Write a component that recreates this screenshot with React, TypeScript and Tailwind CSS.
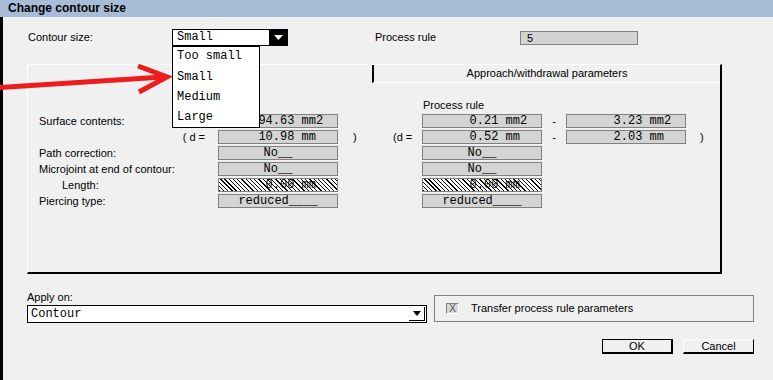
import React from "react";

const SANS = "font-['Liberation_Sans',Arial,sans-serif]";

function Field({
  children,
  kind = "num",
}: {
  children?: React.ReactNode;
  kind?: "num" | "center" | "hatch";
}) {
  if (kind === "hatch") {
    return (
      <div className="h-[14px] w-[120px] border border-[#808080] bg-[repeating-linear-gradient(45deg,#000_0px,#000_0.9px,#fff_0.9px,#fff_3px)] font-['Liberation_Mono','Courier_New',monospace] text-[12px] leading-[12px] whitespace-pre flex items-center pl-[25px] text-black">
        {children}
      </div>
    );
  }
  if (kind === "center") {
    return (
      <div className="h-[14px] w-[120px] border border-[#808080] bg-[#d4d4d4] font-['Liberation_Mono','Courier_New',monospace] text-[12px] leading-[12px] whitespace-pre flex items-center justify-center text-black">
        {children}
      </div>
    );
  }
  return (
    <div className="h-[14px] w-[120px] border border-[#808080] bg-[#d4d4d4] font-['Liberation_Mono','Courier_New',monospace] text-[12px] leading-[12px] whitespace-pre flex items-center pl-[25px] text-black">
      {children}
    </div>
  );
}

function Row({
  label,
  labelIndent = false,
  dLeft = false,
  left,
  mid,
  right,
  right2,
  close = false,
}: {
  label?: string;
  labelIndent?: boolean;
  dLeft?: boolean;
  left?: React.ReactNode;
  mid?: React.ReactNode;
  right?: React.ReactNode;
  right2?: React.ReactNode;
  close?: boolean;
}) {
  return (
    <div className="flex h-[14px] mt-[2px] items-center">
      <div
        className={
          dLeft
            ? "w-[179px] flex justify-end pr-[13px] text-[11px]"
            : labelIndent
            ? "w-[179px] pl-[23px] text-[11px]"
            : "w-[179px] text-[11px]"
        }
      >
        {dLeft ? "( d =" : label}
      </div>
      {left}
      <div className="w-[84px] flex text-[11px]">{mid}</div>
      {right}
      {right2 ? (
        <>
          <div className="w-[24px] text-center text-[11px]">-</div>
          {right2}
        </>
      ) : null}
      {close ? <div className="pl-[14px] text-[11px]">)</div> : null}
    </div>
  );
}

export default function App() {
  return (
    <div
      className={`relative w-[773px] h-[380px] overflow-hidden bg-[#f0f0f0] text-black ${SANS}`}
    >
      {/* title bar */}
      <div className="h-[17px] bg-[#a7bcd6] pl-[8px] text-[12px] font-bold leading-[17px]">
        Change contour size
      </div>

      <div className="flex h-[363px]">
        <div className="w-[3px] bg-black" />
        <div className="flex-1 flex flex-col">
          {/* top row */}
          <div className="flex items-center h-[17px] mt-[12px] pl-[25px]">
            <div className="w-[144px] text-[11px]">Contour size:</div>
            <div className="relative w-[116px] h-[17px] border border-black bg-white flex">
              <span className="flex-1 pl-[4px] font-['Liberation_Mono','Courier_New',monospace] text-[12px] leading-[15px]">
                Small
              </span>
              <span className="w-[18px] bg-black flex items-center justify-center">
                <svg width="9" height="5" viewBox="0 0 9 5">
                  <path d="M0 0 L9 0 L4.5 5 Z" fill="#fff" />
                </svg>
              </span>
              {/* open dropdown list */}
              <div className="absolute left-[-1px] top-[16px] w-[88px] border border-black bg-white z-10 font-['Liberation_Mono','Courier_New',monospace] text-[12px]">
                <div className="h-[20px] leading-[18px] pl-[4px]">Too small</div>
                <div className="h-[20px] leading-[20px] pl-[4px]">Small</div>
                <div className="h-[20px] leading-[20px] pl-[4px]">Medium</div>
                <div className="h-[20px] leading-[20px] pl-[4px]">Large</div>
              </div>
            </div>
            <div className="ml-[87px] w-[145px] text-[11px]">Process rule</div>
            <div className="w-[118px] h-[14px] border border-[#808080] bg-[#d4d4d4] pl-[6px] text-[11px] leading-[12px]">
              5
            </div>
          </div>

          {/* tab panel */}
          <div className="ml-[24px] mt-[18px] w-[695px] h-[210px] border-t border-l border-t-white border-l-white border-r-2 border-b-2 border-r-black border-b-black flex flex-col">
            <div className="flex h-[18px]">
              <div className="w-[344px]" />
              <div className="flex-1 border-l-2 border-l-black border-b border-b-white flex items-center justify-center text-[11px]">
                Approach/withdrawal parameters
              </div>
            </div>
            <div className="pl-[11px] flex flex-col">
              <div className="flex h-[14px] mt-[15px] items-center">
                <div className="ml-[384px] text-[11px]">Process rule</div>
              </div>
              <Row
                label="Surface contents:"
                left={<Field>{"1094.63 mm2"}</Field>}
                right={<Field>{"   0.21 mm2"}</Field>}
                right2={<Field>{"   3.23 mm2"}</Field>}
              />
              <Row
                dLeft
                left={<Field>{"  10.98 mm"}</Field>}
                mid={
                  <>
                    <span className="w-[55px] pl-[15px]">)</span>
                    <span>(d =</span>
                  </>
                }
                right={<Field>{"   0.52 mm"}</Field>}
                right2={<Field>{"   2.03 mm"}</Field>}
                close
              />
              <Row
                label="Path correction:"
                left={<Field kind="center">{"No__"}</Field>}
                right={<Field kind="center">{"No__"}</Field>}
              />
              <Row
                label="Microjoint at end of contour:"
                left={<Field kind="center">{"No__"}</Field>}
                right={<Field kind="center">{"No__"}</Field>}
              />
              <Row
                label="Length:"
                labelIndent
                left={<Field kind="hatch">{"   0.00 mm"}</Field>}
                right={<Field kind="hatch">{"   0.00 mm"}</Field>}
              />
              <Row
                label="Piercing type:"
                left={<Field kind="center">{"reduced____"}</Field>}
                right={<Field kind="center">{"reduced____"}</Field>}
              />
            </div>
          </div>

          {/* bottom row */}
          <div className="flex items-start ml-[24px] mt-[16px]">
            <div className="w-[400px] flex flex-col">
              <div className="h-[14px] leading-[14px] text-[11px]">Apply on:</div>
              <div className="mt-[1px] h-[18px] border border-black bg-white flex items-center">
                <span className="flex-1 pl-[3px] font-['Liberation_Mono','Courier_New',monospace] text-[12px] leading-[14px]">
                  Contour
                </span>
                <span className="w-[16px] h-[14px] mr-[1px] border-r border-b border-black bg-white flex items-center justify-center">
                  <svg width="8" height="5" viewBox="0 0 8 5">
                    <path d="M0 0 L8 0 L4 5 Z" fill="#000" />
                  </svg>
                </span>
              </div>
            </div>
            <div className="ml-[7px] mt-[5px] w-[320px] h-[27px] border border-[#808080] flex items-center">
              <div className="ml-[11px] w-[13px] h-[11px] border-t border-l border-t-[#808080] border-l-[#808080] border-r border-b border-r-white border-b-white bg-[#d8d8d8] flex items-center justify-center text-[10px] leading-[10px] text-[#555]">
                X
              </div>
              <div className="ml-[12px] text-[11px]">Transfer process rule parameters</div>
            </div>
          </div>

          {/* buttons */}
          <div className="flex justify-end pr-[19px] mt-[16px] gap-[10px]">
            <div className="w-[71px] h-[15px] border-t border-l border-r-2 border-b-2 border-black flex items-center justify-center text-[11px]">
              OK
            </div>
            <div className="w-[71px] h-[15px] border-t border-l border-t-white border-l-white border-r border-b-2 border-r-black border-b-black flex items-center justify-center text-[11px]">
              Cancel
            </div>
          </div>
        </div>
      </div>

      {/* red annotation arrow */}
      <svg
        className="absolute left-0 top-0 z-20 pointer-events-none"
        width="180"
        height="110"
        viewBox="0 0 180 110"
      >
        <path d="M0 87.5 L163 77" stroke="#ee1c1c" strokeWidth="5" fill="none" />
        <path
          d="M138 66 L167 77 L139 92"
          stroke="#ee1c1c"
          strokeWidth="5"
          fill="none"
          strokeLinejoin="miter"
          strokeLinecap="butt"
        />
      </svg>
    </div>
  );
}
